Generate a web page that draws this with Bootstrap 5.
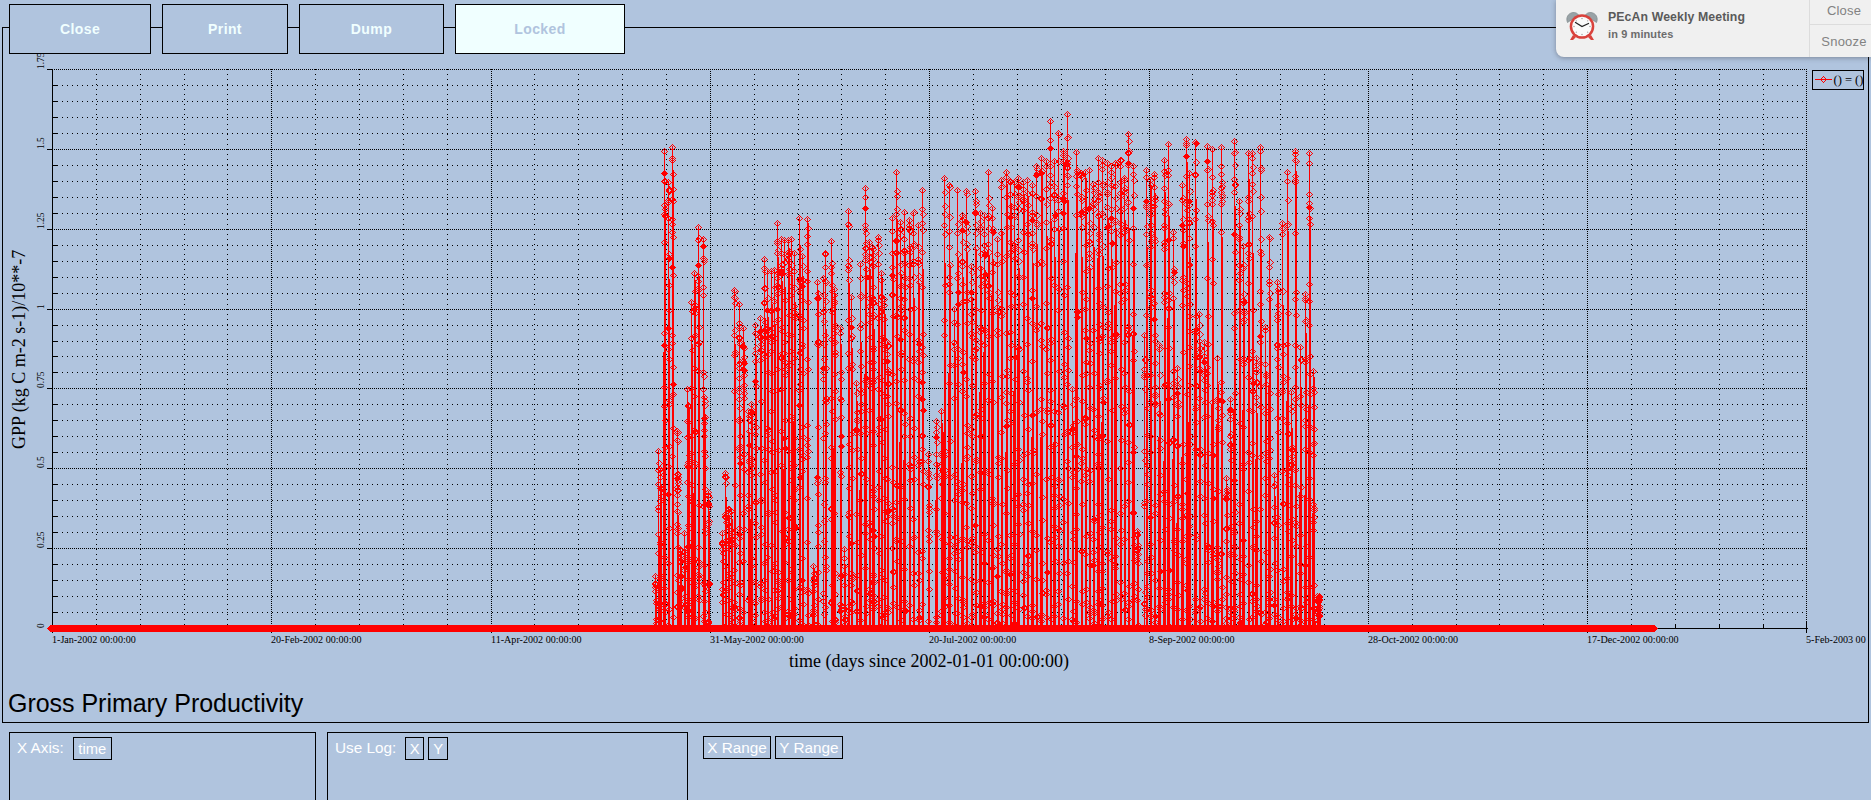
<!DOCTYPE html>
<html lang="en">
<head>
<meta charset="utf-8">
<title>Gross Primary Productivity</title>
<link href="https://cdn.jsdelivr.net/npm/bootstrap@5.3.0/dist/css/bootstrap.min.css" rel="stylesheet">
<style>
html,body{height:800px;overflow:hidden;background:#b0c4de;margin:0;font-family:"Liberation Sans",Arial,sans-serif}
.stage{position:relative;width:1871px;height:800px;overflow:hidden}
.tabbar{padding:4px 0 0 9px;gap:11px;height:54px;position:relative;z-index:2;align-items:flex-start}
.tabbtn{height:50px;background:#b0c4de;color:#f0ffff;border:1px solid #000;border-radius:0;font:bold 14px "Liberation Sans",Arial,sans-serif;letter-spacing:.4px;padding:0}
.tabbtn:hover{background:#b0c4de;color:#f0ffff;border-color:#000}
.w-close{width:142px}.w-print{width:126px}.w-dump{width:145px}.w-lock{width:170px}
.tabbtn.is-locked,.tabbtn.is-locked:hover{background:#f0ffff;color:#b0c4de}
.plotpanel{margin:-27px 2px 0 2px;height:696px;width:1867px;border:1px solid #000;position:relative;z-index:1}
.plotsvg{display:block}
.charttitle{font-size:25px;line-height:30px;color:#000;padding:8px 0 0 5px;letter-spacing:-.03px}
.ctrlrow{margin-top:9px;padding-left:9px;align-items:flex-start}
.ctrlbox{height:110px;border:1px solid #000;padding:4px 7px;color:#fff;font-size:15.3px}
.box-x{width:307px;margin-right:11px;gap:9px}
.box-log{width:361px;margin-right:15px;gap:9px}
.ctrllabel{line-height:22px}
.minibtn{color:#fff;background:transparent;border:1px solid #000;border-radius:0;font:14.8px/20px "Liberation Sans",Arial,sans-serif;padding:0;height:23px}
.minibtn:hover{color:#fff;background:transparent;border-color:#000}
.minigroup{gap:4px}
.rangegroup{margin-top:4px}
.minibtn.b-time{width:39px}
.minibtn.b-x{width:19px}
.minibtn.b-y{width:20px}
.minibtn.b-range{width:68px;font-size:15.3px}
.notice{position:absolute;top:0;right:0;width:315px;height:57px;z-index:5;background:#f0f0f0;border-radius:0 0 0 8px;box-shadow:0 1px 5px rgba(60,60,70,.45);font-family:"Liberation Sans",Arial,sans-serif}
.notice-main{padding:0 0 6px 9px;gap:9px;width:253px}
.notice-title{font-size:12.3px;font-weight:700;color:#5a5a5a;letter-spacing:.1px;line-height:16px}
.notice-sub{font-size:11px;font-weight:700;color:#6c6c6c;letter-spacing:.1px;line-height:15px;margin-top:2px}
.notice-acts{width:62px;border-left:1px solid #dcdcdc;color:#828282;font-size:13px;letter-spacing:.2px;text-align:center;padding-left:7px}
.notice-acts>div{height:25px;line-height:22px;margin-left:-7px;padding-left:7px}
.notice-acts>div:first-child{border-bottom:1px solid #dcdcdc}
.notice-acts>div:last-child{height:32px;line-height:34px}
.serif{font-family:"Liberation Serif","Times New Roman",serif;fill:#000}
</style>
</head>
<body>
<div class="stage">
  <div class="tabbar d-flex">
    <button type="button" class="btn tabbtn w-close">Close</button>
    <button type="button" class="btn tabbtn w-print">Print</button>
    <button type="button" class="btn tabbtn w-dump">Dump</button>
    <button type="button" class="btn tabbtn w-lock is-locked">Locked</button>
  </div>

  <div class="plotpanel">
    <svg class="plotsvg" id="plot" width="1865" height="652" viewBox="3 28 1865 652" xmlns="http://www.w3.org/2000/svg">
      <g id="grid"></g>
      <g id="axes" stroke="#000" stroke-width="1" shape-rendering="crispEdges"></g>
      <g id="labels" class="serif"></g>
      <text class="serif" font-size="18" transform="translate(25 449) rotate(-90)">GPP (kg C m-2 s-1)/10**-7</text>
      <text class="serif" font-size="18" x="789" y="667">time (days since 2002-01-01 00:00:00)</text>
      <g id="data" fill="none" stroke="#f00" stroke-width="1" shape-rendering="crispEdges"></g>
      <g id="legend">
        <rect x="1812.5" y="70.5" width="51" height="19" fill="none" stroke="#000"/>
        <path d="M1815 79.5H1832" stroke="#f00" shape-rendering="crispEdges"/>
        <path d="M1823.5 76.5l3 3-3 3-3-3z" fill="none" stroke="#f00" shape-rendering="crispEdges"/>
        <text class="serif" font-size="12.5" x="1833.5" y="84">() = ()</text>
      </g>
    </svg>
    <div class="charttitle">Gross Primary Productivity</div>
  </div>

  <div class="ctrlrow d-flex">
    <div class="ctrlbox box-x d-flex">
      <span class="ctrllabel">X Axis:</span>
      <button type="button" class="btn minibtn b-time">time</button>
    </div>
    <div class="ctrlbox box-log d-flex">
      <span class="ctrllabel">Use Log:</span>
      <div class="d-flex minigroup">
        <button type="button" class="btn minibtn b-x">X</button>
        <button type="button" class="btn minibtn b-y">Y</button>
      </div>
    </div>
    <div class="d-flex minigroup rangegroup">
      <button type="button" class="btn minibtn b-range">X Range</button>
      <button type="button" class="btn minibtn b-range">Y Range</button>
    </div>
  </div>

  <aside class="notice d-flex">
    <div class="notice-main d-flex align-items-center">
      <svg width="34" height="30" viewBox="0 0 34 30" xmlns="http://www.w3.org/2000/svg">
        <path d="M2.5 11.5C.5 7 3 2 8 1.5c2.500-.2 4.500 .8 5.500 2.500z" fill="#98a2a6" stroke="#7d868a" stroke-width=".7"/>
        <path d="M31.500 11.500C33.500 7 31 2 26 1.500c-2.500-.2-4.500 .8-5.500 2.500z" fill="#98a2a6" stroke="#7d868a" stroke-width=".7"/>
        <path d="M8 24l-3 5h3l3-3zM26 24l3 5h-3l-3-3z" fill="#d9423c"/>
        <circle cx="17" cy="15.500" r="12.300" fill="#d9423c"/>
        <circle cx="17" cy="15.500" r="9.800" fill="#fafafa"/>
        <g fill="#999"><circle cx="17" cy="7.500" r=".7"/><circle cx="17" cy="23.500" r=".7"/><circle cx="9" cy="15.500" r=".7"/><circle cx="25" cy="15.500" r=".7"/><circle cx="11.300" cy="9.800" r=".6"/><circle cx="22.700" cy="9.800" r=".6"/><circle cx="11.300" cy="21.200" r=".6"/><circle cx="22.700" cy="21.200" r=".6"/></g>
        <path d="M10.500 11.500L17 15.500L23.500 12.500" fill="none" stroke="#222" stroke-width="1.300" stroke-linecap="round"/>
      </svg>
      <div>
        <div class="notice-title">PEcAn Weekly Meeting</div>
        <div class="notice-sub">in 9 minutes</div>
      </div>
    </div>
    <div class="notice-acts">
      <div>Close</div>
      <div>Snooze</div>
    </div>
  </aside>
</div>

<script>
(function(){
  var NS='http://www.w3.org/2000/svg';
  function el(parent,tag,attrs,text){var e=document.createElementNS(NS,tag);for(var k in attrs)e.setAttribute(k,attrs[k]);if(text!==undefined)e.textContent=text;parent.appendChild(e);return e;}
  var L=52,R=1807,T=69,B=628,xStep=219.3,yStep=79.86;
  var grid=document.getElementById('grid'),axes=document.getElementById('axes'),labels=document.getElementById('labels');
  function dotted(x1,y1,x2,y2,dash){el(grid,'line',{x1:x1,y1:y1,x2:x2,y2:y2,stroke:'#000','stroke-width':1,'stroke-dasharray':dash,'shape-rendering':'crispEdges'});}
  var i,p;
  for(i=0;i<=35;i++){
    p=Math.round(T+i*(B-T)/35)+.5;
    if(i<35) dotted(L,p,R,p,i%5===0?'1 1':'1 4');
    if(i%5===0) el(axes,'line',{x1:47,y1:p,x2:L,y2:p});
    else if(i<35) el(axes,'line',{x1:L,y1:p,x2:L+6,y2:p});
  }
  for(i=0;i<=40;i++){
    p=Math.round(L+i*xStep/5)+.5;
    if(i>0) dotted(p,T,p,B,i%5===0?'1 1':'1 4');
    if(i%5===0) el(axes,'line',{x1:p,y1:i===40?622:B,x2:p,y2:633});
    else el(axes,'line',{x1:p,y1:B-4,x2:p,y2:B});
  }
  el(axes,'line',{x1:L+.5,y1:T,x2:L+.5,y2:B+1});
  el(axes,'line',{x1:L,y1:B+.5,x2:R+1,y2:B+.5});
  var xl=['1-Jan-2002 00:00:00','20-Feb-2002 00:00:00','11-Apr-2002 00:00:00','31-May-2002 00:00:00','20-Jul-2002 00:00:00','8-Sep-2002 00:00:00','28-Oct-2002 00:00:00','17-Dec-2002 00:00:00','5-Feb-2003 00'];
  xl.forEach(function(s,j){el(labels,'text',{x:Math.round(L+j*xStep),y:643,'font-size':10.1},s);});
  var yl=['0','0.25','0.5','0.75','1','1.25','1.5','1.75'];
  yl.forEach(function(s,j){var y=Math.round(B-j*yStep);el(labels,'text',{transform:'translate(44 '+y+') rotate(-90)','font-size':9.4},s);});

  var A=[[30,1380],[40,1015],[45,1070],[57,145],[70,235],[82,133],[97,958],[95,1130],[106,1300],[117,1255],[125,835],[130,885],[137,585],[148,500],[160,365],[175,400],[178,860],[190,1135],
  [232,1255],[241,1080],[250,1185],[258,1190],[266,550],[281,590],[295,660],[283,765],[308,900],[318,880],[331,650],[346,630],[358,458],[367,495],[378,495],[388,490],[397,353],[408,400],[418,405],[428,405],[438,400],[447,440],[463,340],[470,450],[487,342],[505,1350],[515,527],[534,515],[541,440],[559,408],[568,545],[586,660],[598,1300],[610,320],[618,570],[632,820],[645,473],[660,253],[672,410],[682,425]];
  var C=[[10,430],[25,395],[33,500],[43,575],[50,700],[65,340],[79,205],[90,350],[103,322],[118,345],[130,325],[145,360],[156,258],[175,1025],[199,930],[212,900],[222,225],[237,245],[252,605],[262,258],[275,330],[289,260],[303,480],[316,260],[331,325],[343,330],[355,205],[367,310],[381,400],[393,230],[408,205],[420,235],[433,235],[445,225],[460,235],[472,230],[485,245],[498,190],[514,165],[527,175],[541,58],[552,175],[565,92],[579,145],[592,38],[607,835],[619,148],[632,210],[645,205],[657,200],[670,240],[684,165]];
  var E=[[10,165],[22,170],[35,180],[48,190],[60,180],[76,170],[88,225],[100,95],[113,190],[126,1250],[147,680],[153,200],[165,230],[178,212],[193,710],[207,170],[220,125],[233,380],[247,775],[260,245],[273,110],[283,210],[300,118],[313,620],[327,700],[337,130],[352,140],[365,745],[378,133],[392,1095],[405,865],[418,115],[432,290],[445,420],[458,150],[470,150],[484,745],[496,135],[510,655],[523,395],[536,1085],[547,525],[561,355],[576,205],[589,845],[601,145],[615,715],[630,560],[641,152],[655,785]];
  var spikes=[];
  function add(list,ox){list.forEach(function(s){spikes.push([Math.round(ox+s[0]/3),Math.round(100+s[1]/2.904)]);});}
  add(A,645);add(C,870);add(E,1095);
  spikes.sort(function(a,b){return a[0]-b[0];});

  var seed=20020101;
  function rnd(){seed=(seed*1664525+1013904223)%4294967296;return seed/4294967296;}
  var lines='',diamonds='',solid='';
  function dia(x,y){x=Math.round(x)+.5;y=Math.round(y)+.5;return 'M'+x+' '+(y-3)+'l3 3-3 3-3-3z';}
  var base=628;
  spikes.forEach(function(s,idx){
    var x=s[0],top=s[1],h=base-top,j;
    var next=spikes[idx+1]?spikes[idx+1][0]:9999;
    lines+='M'+(x+.5)+' '+base+'V'+top;
    if(next-x>=3) lines+='M'+(x+1.5)+' '+base+'V'+Math.round(base-h*(.78+rnd()*.21));
    if(next-x>=4&&rnd()<.45) lines+='M'+(x-.5)+' '+base+'V'+Math.round(base-h*(.35+rnd()*.45));
    diamonds+=dia(x,top+1);
    var n=Math.round(4+h/38);
    for(j=0;j<n;j++){
      var f=rnd(),dy=h*f,dx=(rnd()<.5?0:1);
      diamonds+=dia(x+dx,base-dy);
      if(rnd()<.05){var yy=Math.round(base-dy)+.5,xx=x+dx+.5;solid+='M'+xx+' '+(yy-3)+'l3 3-3 3-3-3z';}
    }
    var c=2+Math.floor(rnd()*4);
    for(j=0;j<c;j++) diamonds+=dia(x+(rnd()<.5?0:1),top+4+rnd()*Math.min(70,h*.3));
    if(h>120&&rnd()<.28){solid+=dia(x,top+8+rnd()*50);}
    diamonds+=dia(x+(rnd()<.5?0:1),base-5-rnd()*24);
  });
  for(var q=0;q<22;q++) diamonds+=dia(1317+Math.floor(rnd()*3),593+rnd()*32);
  for(q=1317;q<=1320;q++) lines+='M'+(q+.5)+' '+base+'V600';
  var d=document.getElementById('data');
  el(d,'path',{d:lines});
  el(d,'path',{d:diamonds});
  el(d,'path',{d:solid,fill:'#f00'});
  el(d,'rect',{x:50,y:625,width:1605,height:7,fill:'#f00',stroke:'none'});
  el(d,'path',{d:'M50 625l-3 3.500 3 3.500zM1655 625l3 3.500-3 3.500z',fill:'#f00',stroke:'none'});
})();
</script>
<script src="https://cdn.jsdelivr.net/npm/bootstrap@5.3.0/dist/js/bootstrap.bundle.min.js"></script>
</body>
</html>
